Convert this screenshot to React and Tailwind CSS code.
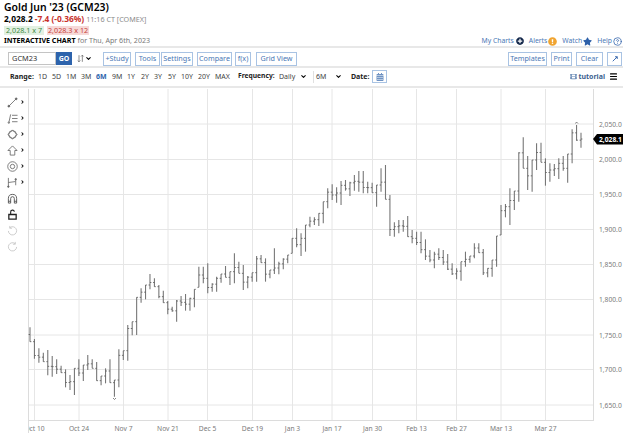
import { ChevronDown, ChevronRight, CircleHelp, Menu } from "lucide-react";
import { FaCalendarAlt, FaExclamationCircle, FaFilm, FaPlusCircle, FaStar } from "react-icons/fa";

// top and bottom of each daily bar, read off the picture at 3x, one list per crop
const seg = (list, origin) => list.map(([t, b]) => [origin + t / 3, origin + b / 3]);
const bars = [
  ...seg([
    [82, 125], [117, 176], [145, 188], [158, 185], [150, 226], [168, 230], [178, 222], [197, 218],
    [208, 262], [225, 270], [205, 285], [178, 228], [195, 243], [165, 210], [178, 205], [186, 242],
    [228, 256], [205, 250], [178, 248], [240, 290], [148, 262], [152, 180], [75, 182], [65, 106],
  ], 300),
  ...seg([
    [142, 255], [115, 158], [105, 148], [72, 118], [85, 110], [105, 145], [122, 158], [153, 193],
    [170, 185], [150, 215], [138, 168], [132, 182], [143, 182], [118, 172], [50, 112], [50, 100], [40, 130],
  ], 250),
  ...seg([
    [400, 425], [380, 425], [372, 398], [348, 382], [365, 405], [310, 400], [335, 370], [345, 420],
    [378, 415], [368, 395], [318, 395], [315, 338], [325, 395], [360, 385], [295, 372], [335, 373],
    [325, 358], [315, 340], [265, 310], [235, 292], [250, 318], [225, 305], [200, 232], [202, 225],
    [190, 228], [155, 220], [115, 175], [103, 150], [112, 158], [93, 165], [90, 122], [95, 138],
    [75, 122], [63, 125], [63, 130], [95, 130], [98, 128], [105, 170], [55, 125], [45, 148],
    [135, 258], [217, 260], [210, 250], [210, 245], [198, 260], [240, 280], [245, 285],
  ], 150),
  ...seg([
    [395, 460], [418, 480], [450, 487], [455, 505], [445, 480], [450, 495], [462, 510], [490, 525],
    [505, 538], [485, 542], [455, 500], [468, 488], [430, 475], [430, 458], [447, 525], [505, 532],
    [480, 530], [408, 500], [315, 405], [312, 352], [265, 375], [273, 330], [157, 305], [112, 205],
    [168, 270], [180, 275], [130, 210], [128, 187], [175, 257], [190, 245], [192, 228], [175, 237],
    [168, 212], [162, 248], [88, 190], [75, 122], [98, 143],
  ], 100),
];
const barX = (i) => 30 + (i * 551) / (bars.length - 1);
const closeY = (i) => {
  const [t, b] = bars[i];
  if (i === bars.length - 1) return 139;
  const [nt, nb] = bars[i + 1];
  return Math.min(b, Math.max(t, (nt + nb) / 2));
};

const gridX = [34.5, 79, 123.5, 168, 207.5, 252.5, 292.5, 332, 372.5, 416.5, 456.5, 501, 545.5];
const xLabels = ["Oct 10", "Oct 24", "Nov 7", "Nov 21", "Dec 5", "Dec 19", "Jan 3", "Jan 17", "Jan 30", "Feb 13", "Feb 27", "Mar 13", "Mar 27"];
const prices = [
  ["2,050.0", 124], ["2,000.0", 159.5], ["1,950.0", 194.5], ["1,900.0", 229.5], ["1,850.0", 264.5],
  ["1,800.0", 299.5], ["1,750.0", 335], ["1,700.0", 369.5], ["1,650.0", 405],
];
const ranges = [
  ["1D", "w-[14px]"], ["5D", "w-[14px]"], ["1M", "w-[15px]"], ["3M", "w-[15px]"], ["6M", "w-[16px]"], ["9M", "w-[15px]"],
  ["1Y", "w-[14px]"], ["2Y", "w-[13px]"], ["3Y", "w-[14px]"], ["5Y", "w-[13px]"], ["10Y", "w-[17px]"], ["20Y", "w-[17px]"], ["MAX", "w-[14px]"],
];

const Btn = ({ w, ml, children }) => (
  <div className={`${w} ${ml} h-[14px] flex items-center justify-center border border-[#a9c3e3] text-[7.2px] leading-none whitespace-nowrap text-[#4a78b5]`}>
    {children}
  </div>
);

const Tool = ({ arrow, children }) => (
  <div className="h-[16px] flex items-center pl-[7px]">
    <svg viewBox="0 0 12 12" className="w-[11px] h-[11px]" fill="none" stroke="currentColor" strokeWidth="0.9">
      {children}
    </svg>
    {arrow && <ChevronRight className="w-[5px] h-[6px] ml-[2px] text-black" strokeWidth={5} />}
  </div>
);

const Chart = () => (
  <svg viewBox="28 89 612 354" className="w-[612px] h-[354px] block" style={{ fontFamily: "'Noto Sans', sans-serif" }}>
    {prices.map(([label, y]) => (
      <g key={label}>
        <line x1="28.5" x2="593" y1={y} y2={y} stroke="#e6e6e6" />
        <text x="599" y={y + 2.5} fontSize="6.7" fill="#7a7a7a">{label}</text>
      </g>
    ))}
    {gridX.map((x, i) => (
      <g key={x}>
        <line x1={x} x2={x} y1="89" y2="420" stroke="#e6e6e6" />
        <text x={x} y="431" fontSize="6.7" fill="#7a7a7a" textAnchor="middle">{xLabels[i]}</text>
      </g>
    ))}
    <line x1="28.5" x2="28.5" y1="89" y2="433" stroke="#dcdcdc" />
    <line x1="593.5" x2="593.5" y1="89" y2="421" stroke="#dcdcdc" />
    <line x1="28.5" x2="593.5" y1="420.5" y2="420.5" stroke="#dcdcdc" />
    {bars.map(([t, b], i) => {
      const x = barX(i);
      const open = i === 0 ? (t + b) / 2 : Math.min(b, Math.max(t, closeY(i - 1)));
      return (
        <g key={i}>
          <line x1={x} x2={x} y1={t} y2={b} stroke="#777" strokeWidth="1.1" />
          <line x1={x - 1.4} x2={x} y1={open} y2={open} stroke="#555" strokeWidth="0.8" />
          <line x1={x} x2={x + 1.4} y1={closeY(i)} y2={closeY(i)} stroke="#555" strokeWidth="0.8" />
        </g>
      );
    })}
    <path d="M575.5 123.5 L576.5 122 L578 123.5" fill="none" stroke="#666" strokeWidth="0.8" />
    <path d="M113 398 L114.5 399.5 L116 398" fill="none" stroke="#666" strokeWidth="0.8" />
    <path d="M593 139 L597 134 H623 V144.5 H597 Z" fill="#000" />
    <text x="599" y="141.6" fontSize="6.7" fontWeight="700" fill="#fff">2,028.1</text>
  </svg>
);

export default function App() {
  return (
    <div className="w-[640px] h-[443px] overflow-hidden bg-white text-black font-['Noto_Sans',sans-serif]">
      <div className="w-[623px]">
        <div className="h-[14px] pl-[4px] text-[10.4px] leading-[15px] font-semibold">Gold Jun '23 (GCM23)</div>
        <div className="h-[11px] pl-[4px] flex items-center text-[8.4px] leading-none whitespace-nowrap">
          <span className="font-bold">2,028.2</span>
          <span className="font-bold text-[#c8312b] ml-[2px]">-7.4 (-0.36%)</span>
          <span className="text-[#8a8a8a] text-[7.2px] ml-[2px]">11:16 CT [COMEX]</span>
        </div>
        <div className="h-[9px] mt-[1px] ml-[4px] flex items-center text-[7.2px] leading-none whitespace-nowrap">
          <span className="bg-[#e3f0e2] text-[#3d8a42] h-[9px] w-[40px] pl-[2px] flex items-center">2,028.1 x 7</span>
          <span className="bg-[#f6d9d8] text-[#c8413b] ml-[3px] h-[9px] w-[42px] pl-[1px] flex items-center">2,028.3 x 12</span>
        </div>
        <div className="h-[11px] pl-[4px] pt-px flex items-center text-[7.1px] leading-none whitespace-nowrap">
          <span className="font-bold">INTERACTIVE CHART</span>
          <span className="text-[#777] ml-[2px]">for Thu, Apr 6th, 2023</span>
          <div className="ml-auto flex items-center text-[#4a78b5] text-[6.8px] pr-[1px]">
            <span>My Charts</span>
            <FaPlusCircle className="w-[8px] h-[8px] ml-[2px] text-[#14284b]" />
            <span className="ml-[5px]">Alerts</span>
            <FaExclamationCircle className="w-[9px] h-[9px] ml-[1px] text-[#f0a431]" />
            <span className="ml-[5px]">Watch</span>
            <FaStar className="w-[9px] h-[9px] ml-[1px] text-[#2d5fa8]" />
            <span className="ml-[5px]">Help</span>
            <CircleHelp className="w-[9px] h-[9px] ml-[1px] text-[#2d5fa8]" />
          </div>
        </div>
        <div className="h-[2px] bg-[#e8e8e8]" />
        <div className="h-[20px] flex items-center border-b-2 border-[#e8e8e8] pl-[8px] pr-[1px] pt-[3px]">
          <div className="w-[48px] h-[13px] border border-[#c4c4c4] text-[7.4px] leading-none text-[#333] flex items-center pl-[3px]">GCM23</div>
          <div className="w-[16px] h-[13px] bg-[#2d63ac] text-white text-[7px] leading-none font-bold flex items-center justify-center">GO</div>
          <svg viewBox="0 0 12 12" className="w-[8px] h-[9px] ml-[5px] text-[#666]" fill="none" stroke="currentColor" strokeWidth="1.1">
            <path d="M3 1V11M1 9L3 11L5 9M8 11V1M6 3L8 1L10 3" />
          </svg>
          <ChevronDown className="w-[7px] h-[7px] text-black" strokeWidth={3.5} />
          <Btn w="w-[28px]" ml="ml-[11px]">+Study</Btn>
          <Btn w="w-[25px]" ml="ml-[4px]">Tools</Btn>
          <Btn w="w-[32px]" ml="ml-[1px]">Settings</Btn>
          <Btn w="w-[35px]" ml="ml-[4px]">Compare</Btn>
          <Btn w="w-[16px]" ml="ml-[3px]">f(x)</Btn>
          <Btn w="w-[41px]" ml="ml-[5px]">Grid View</Btn>
          <Btn w="w-[39px]" ml="ml-auto">Templates</Btn>
          <Btn w="w-[21px]" ml="ml-[4px]">Print</Btn>
          <Btn w="w-[27px]" ml="ml-[4px]">Clear</Btn>
          <Btn w="w-[15px]" ml="ml-[4px]">
            <svg viewBox="0 0 8 8" className="w-[6px] h-[6px] text-[#2d5fa8]" fill="none" stroke="currentColor" strokeWidth="1.2">
              <path d="M1 7L7 1M4 1H7V4" />
            </svg>
          </Btn>
        </div>
        <div className="h-[20px] flex items-center border-b-2 border-[#e8e8e8] pl-[10px] pb-px text-[7px] leading-none text-[#444] whitespace-nowrap">
          <span className="w-[28px] font-bold text-[#222]">Range:</span>
          {ranges.map(([r, w]) => (
            <span key={r} className={`${w} ${r === "6M" ? "font-bold text-[#2d63ac]" : ""}`}>{r}</span>
          ))}
          <span className="w-[41px] ml-[9px] font-bold text-[#222] text-[6.7px]">Frequency:</span>
          <span className="w-[21px]">Daily</span>
          <ChevronDown className="w-[7px] h-[7px] text-black" strokeWidth={3.5} />
          <div className="w-px h-[12px] bg-[#e0e0e0] ml-[6px]" />
          <span className="w-[14px] ml-[2px]">6M</span>
          <ChevronDown className="w-[7px] h-[7px] ml-[5px] text-black" strokeWidth={3.5} />
          <span className="w-[21px] ml-[9px] font-bold text-[#222]">Date:</span>
          <div className="w-[15px] h-[13px] border border-[#a9c3e3] flex items-center justify-center">
            <FaCalendarAlt className="w-[8px] h-[8px] text-[#6f93c4]" />
          </div>
          <FaFilm className="w-[7px] h-[7px] ml-auto text-[#5a7fae]" />
          <span className="ml-[1px] font-bold text-[#3c5f8f]">tutorial</span>
          <Menu className="w-[9px] h-[9px] ml-[4px] mr-[5px] text-black" strokeWidth={3} />
        </div>
      </div>
      <div className="flex mt-[1px]">
        <div className="w-[28px] shrink-0 pt-[5px] text-[#666]">
          <Tool arrow><path d="M2 10L10 2" /><circle cx="2" cy="10" r="1" fill="currentColor" /><circle cx="10" cy="2" r="1" fill="currentColor" /></Tool>
          <Tool arrow><path d="M5.5 2.5H11.5M5.5 6H11.5M5.5 9.5H11.5M4 1.5L2 10.5" /><circle cx="2" cy="10.5" r="0.8" /></Tool>
          <Tool arrow><path d="M6 1L11 6L6 11L1 6Z" /><circle cx="6" cy="6" r="4.2" /></Tool>
          <Tool arrow><path d="M6 1L11 6H8.5V11H3.5V6H1Z" /></Tool>
          <Tool arrow><circle cx="6" cy="6" r="5.2" /><circle cx="6" cy="6" r="2.4" /></Tool>
          <Tool arrow><path d="M1.5 1V11M1.5 6L9 5M9.5 3V9" /><circle cx="9.5" cy="2.5" r="0.8" fill="currentColor" /><circle cx="1.5" cy="10.5" r="0.8" fill="currentColor" /></Tool>
          <Tool><path d="M1.5 11V6A4.5 4.5 0 0 1 10.5 6V11H8V6A2 2 0 0 0 4 6V11ZM1.5 9H4M8 9H10.5" stroke="#444" /></Tool>
          <Tool><path d="M2 6H10V11H2Z" strokeWidth="1.4" stroke="#222" /><path d="M4 6V3.5A2 2 0 0 1 8 3" stroke="#222" strokeWidth="1.2" /></Tool>
          <div className="text-[#c4c4c4]">
            <Tool><path d="M3 3A4.5 4.5 0 1 1 1.5 6.5M3 1V3.5H5.5" /></Tool>
            <Tool><path d="M9 3A4.5 4.5 0 1 0 10.5 6.5M9 1V3.5H6.5" /></Tool>
          </div>
        </div>
        <Chart />
      </div>
    </div>
  );
}
